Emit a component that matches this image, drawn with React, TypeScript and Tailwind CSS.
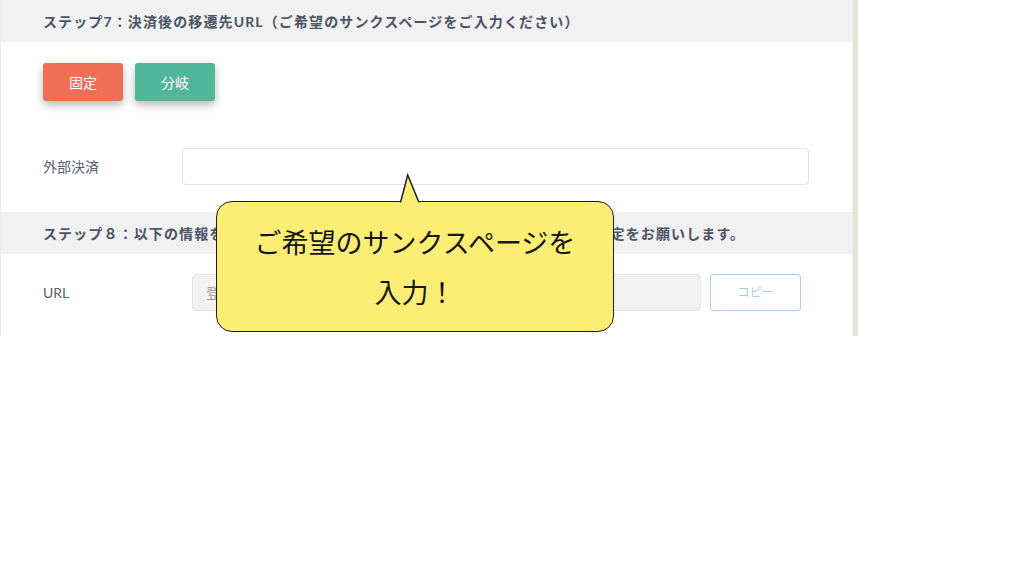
const jp = "font-['Lato','Noto_Sans_CJK_JP',sans-serif]";

function StepHeader({ children }: { children: React.ReactNode }) {
  return (
    <div className="h-[42px] bg-[#f1f1f1] pl-[42px] flex items-center text-[14px] font-bold tracking-[0.08em] text-[#4b5365] whitespace-nowrap">
      {children}
    </div>
  );
}

export default function App() {
  return (
    <div className={`relative w-[1024px] h-[576px] bg-white overflow-hidden ${jp}`}>
      <div className="flex w-[858px] h-[336px]">
        <div className="flex-1 flex flex-col border-l border-[#ececec]">
          <StepHeader>ステップ7：決済後の移遷先URL（ご希望のサンクスページをご入力ください）</StepHeader>

          <div className="flex gap-[12px] pl-[42px] pt-[21px]">
            <button className="w-[80px] h-[38px] rounded-[3px] bg-[#ee6e58] text-white text-[14px] shadow-[0_4px_8px_rgba(0,0,0,0.28)]">
              固定
            </button>
            <button className="w-[80px] h-[38px] rounded-[3px] bg-[#52b69a] text-white text-[14px] shadow-[0_4px_8px_rgba(0,0,0,0.28)]">
              分岐
            </button>
          </div>

          <div className="flex items-center pl-[42px] mt-[47px]">
            <span className="w-[139px] text-[14px] text-[#5a6272]">外部決済</span>
            <input className="w-[627px] h-[37px] rounded-[4px] border border-[#e2e2e2] bg-white" />
          </div>

          <div className="mt-[27px]">
            <StepHeader>ステップ８：以下の情報を決済サービスの管理画面にてご登録の上、Webhookの設定をお願いします。</StepHeader>
          </div>

          <div className="flex items-center pl-[42px] mt-[20px]">
            <span className="w-[149px] text-[14px] text-[#5a6272]">URL</span>
            <div className="w-[509px] h-[37px] rounded-[4px] border border-[#e4e4e4] bg-[#f2f2f2] flex items-center pl-[13px] text-[14px] text-[#9aa0a8]">
              登録後に発行されます
            </div>
            <button className="ml-[9px] w-[91px] h-[37px] rounded-[3px] border border-[#a9cdf6] bg-white text-[12px] text-[#a9c7ee]">
              コピー
            </button>
          </div>
        </div>
        <div className="w-[6px] bg-[#e4e2dd] border-l border-[#efeee9]" />
      </div>

      <div className="absolute left-[216px] top-[201px] w-[398px] h-[131px] rounded-[16px] border-[1.5px] border-[#1c1c1c] bg-[#fcee74] flex flex-col items-center justify-center text-[27px] leading-[50px] text-[#151515] font-['Noto_Sans_CJK_JP',sans-serif]">
        <span>ご希望のサンクスページを</span>
        <span>入力！</span>
      </div>
      <svg className="absolute left-[398px] top-[173px]" width="24" height="30" viewBox="0 0 24 30">
        <path d="M2.5 29.5 L9.7 2 L21 29.5" fill="#fcee74" stroke="#1c1c1c" strokeWidth="1.5" strokeLinejoin="miter" />
        <rect x="3.3" y="28.6" width="17" height="2" fill="#fcee74" />
      </svg>
    </div>
  );
}
